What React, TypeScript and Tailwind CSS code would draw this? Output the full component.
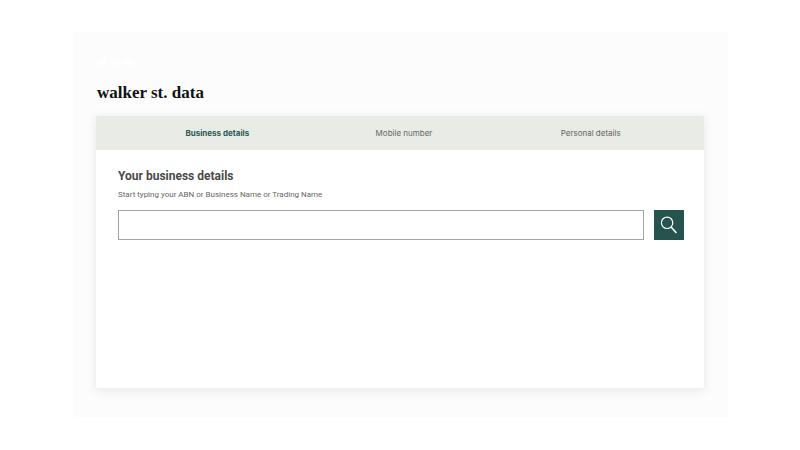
import { useState } from "react";
import type { FormEvent } from "react";
import clsx from "clsx";

const steps = ["Business details", "Mobile number", "Personal details"];

// pale three-part mark above the wordmark, barely visible on the panel
const Mark = () => (
  <svg
    viewBox="0 0 38 12"
    className="h-3 w-[38px]"
    fill="#fefefe"
    aria-hidden="true"
  >
    <ellipse cx="6" cy="6" rx="5" ry="4.5" />
    <ellipse cx="20" cy="6" rx="5" ry="4" />
    <ellipse cx="33" cy="6" rx="5" ry="4.5" />
  </svg>
);

const SearchIcon = () => (
  <svg
    viewBox="0 0 18 18"
    className="size-[18px]"
    fill="none"
    stroke="currentColor"
    strokeWidth="1.2"
    aria-hidden="true"
  >
    <circle cx="7.1" cy="6.8" r="5.7" />
    <path d="M11.1 11 16.4 17" strokeWidth="1.6" />
  </svg>
);

export default function App() {
  const [activeStep, setActiveStep] = useState(0);
  const [query, setQuery] = useState("");

  const handleSubmit = (e: FormEvent) => {
    e.preventDefault();
    if (!query.trim()) return;
    setActiveStep(1);
  };

  return (
    <div className="min-h-screen bg-white py-8 pr-[72px] pl-[73px] font-['Roboto',sans-serif]">
      <main className="bg-[#fcfcfc] pt-6 pr-6 pb-[29px] pl-[23px]">
        <Mark />
        <h1 className="mt-3 mb-[11px] pt-px pl-px font-['Liberation_Serif',serif] text-[17px] leading-6 font-bold text-[#111111]">
          walker st. data
        </h1>

        <section className="bg-white shadow-[0_2px_10px_rgba(0,0,0,0.09)]">
          <nav className="grid grid-cols-3 bg-[#e9ece6] pr-5 pl-7 font-['Inter',sans-serif]">
            {steps.map((step, i) => (
              <button
                key={step}
                type="button"
                onClick={() => setActiveStep(i)}
                className={clsx(
                  "h-[34px] text-[8px]",
                  i === activeStep
                    ? "font-bold text-[#2a5a52]"
                    : "text-[#666666]"
                )}
              >
                {step}
              </button>
            ))}
          </nav>

          <form
            onSubmit={handleSubmit}
            className="min-h-[238px] pt-[18px] pr-5 pl-[22px]"
          >
            <h2 className="text-xs leading-4 font-bold text-[#4a4a4a]">
              Your business details
            </h2>
            <label
              htmlFor="business"
              className="mt-[3px] block text-[8px] leading-4 text-[#666666]"
            >
              Start typing your ABN or Business Name or Trading Name
            </label>
            <div className="mt-[7px] flex gap-[10px]">
              <input
                id="business"
                type="text"
                value={query}
                onChange={(e) => setQuery(e.target.value)}
                className="h-[30px] min-w-0 flex-1 border border-[#a3a3a3] bg-white px-2 text-xs text-[#444444] outline-none focus:border-[#25544f]"
              />
              <button
                type="submit"
                aria-label="Search"
                className="flex size-[30px] items-center justify-center bg-[#25544f] text-white"
              >
                <SearchIcon />
              </button>
            </div>
          </form>
        </section>
      </main>
    </div>
  );
}
